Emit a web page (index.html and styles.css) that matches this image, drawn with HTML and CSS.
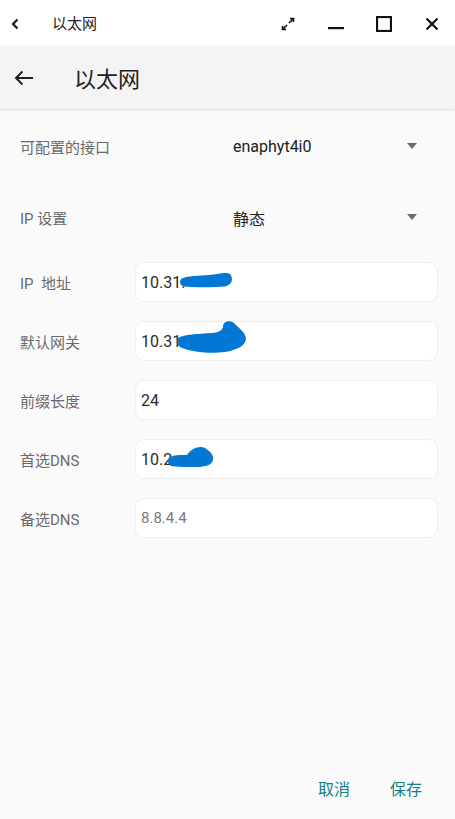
FILE: index.html
```html
<!DOCTYPE html>
<html lang="zh">
<head>
<meta charset="utf-8">
<link rel="stylesheet" href="styles.css">
</head>
<body>
<div class="window">
  <div class="titlebar">
    <svg class="tb-back" width="8" height="12" viewBox="0 0 8 12"><path d="M6.5 1.5 L2 6 L6.5 10.5" fill="none" stroke="#111" stroke-width="2.2"/></svg>
    <span class="tb-title">以太网</span>
    <div class="tb-icons">
      <svg class="ic" width="14" height="14" viewBox="0 0 14 14"><path d="M8 6 L12.5 1.5 M9 1.5 H12.5 V5 M6 8 L1.5 12.5 M1.5 9 V12.5 H5" fill="none" stroke="#111" stroke-width="1.6"/></svg>
      <svg class="ic" width="16" height="16" viewBox="0 0 16 16"><rect x="0" y="11" width="16" height="2.2" fill="#111"/></svg>
      <svg class="ic" width="16" height="16" viewBox="0 0 16 16"><rect x="1" y="1" width="14" height="14" fill="none" stroke="#111" stroke-width="2.2"/></svg>
      <svg class="ic" width="14" height="14" viewBox="0 0 14 14"><path d="M1.5 1.5 L12.5 12.5 M12.5 1.5 L1.5 12.5" fill="none" stroke="#111" stroke-width="2.2"/></svg>
    </div>
  </div>
  <div class="appbar">
    <svg class="ab-back" width="20" height="16" viewBox="0 0 20 16"><path d="M19 8 H2 M8.5 1.5 L2 8 L8.5 14.5" fill="none" stroke="#222" stroke-width="2"/></svg>
    <span class="ab-title">以太网</span>
  </div>
  <div class="content">
    <div class="select-row">
      <span class="label">可配置的接口</span>
      <span class="select-value">enaphyt4i0</span>
      <span class="caret"></span>
    </div>
    <div class="select-row">
      <span class="label">IP 设置</span>
      <span class="select-value">静态</span>
      <span class="caret"></span>
    </div>
    <div class="fields">
      <div class="field-row">
        <span class="label">IP&nbsp; 地址</span>
        <div class="input">10.31.
          <svg class="scribble" width="54" height="17" viewBox="0 0 54 17" style="left:43px;top:8px"><path d="M2 8 C8 4.5 20 5 30 4 C40 3 46 0.5 51 3 C54.5 7 53.5 14 46 15.5 C34 16.5 14 16.5 5 15.5 C1 14.5 0 11 2 8 Z" fill="#0277d4"/></svg>
        </div>
      </div>
      <div class="field-row">
        <span class="label">默认网关</span>
        <div class="input">10.31
          <svg class="scribble" width="71" height="35" viewBox="0 0 71 35" style="left:40px;top:-2px"><path d="M2 18 C8 14 22 14 36 13 C42 12.5 46 11 47 7 C47 1.5 53 -0.5 58 3 C63 8 70 13 70 19 C69 26 61 30 49 32 C35 34 16 32 6 28 C1 26 0 22 2 18 Z" fill="#0277d4"/></svg>
        </div>
      </div>
      <div class="field-row">
        <span class="label">前缀长度</span>
        <div class="input">24</div>
      </div>
      <div class="field-row">
        <span class="label">首选DNS</span>
        <div class="input">10.2
          <svg class="scribble" width="47" height="23" viewBox="0 0 47 23" style="left:31px;top:5px"><path d="M2 13 C6 9.5 14 10 20 10 C24 4 32 0 38 3 C43 6 47 10 46 15 C45 20 38 22 30 22 C20 22 10 22 4 21 C1 19.5 0 16 2 13 Z" fill="#0277d4"/></svg>
        </div>
      </div>
      <div class="field-row">
        <span class="label">备选DNS</span>
        <div class="input placeholder">8.8.4.4</div>
      </div>
    </div>
  </div>
  <div class="actions">
    <span class="btn">取消</span>
    <span class="btn">保存</span>
  </div>
</div>
</body>
</html>
```
FILE: styles.css
```css
* { box-sizing: border-box; }
html, body { margin: 0; padding: 0; }
body {
  width: 455px;
  height: 819px;
  overflow: hidden;
  background: #fafafa;
  font-family: Roboto, "Noto Sans CJK SC", sans-serif;
}
.window {
  display: flex;
  flex-direction: column;
  height: 819px;
}
.titlebar {
  height: 46px;
  background: #ffffff;
  display: flex;
  align-items: center;
  padding-left: 11px;
  flex-shrink: 0;
}
.tb-back { margin-top: 1px; }
.tb-title {
  margin-left: 33px;
  font-size: 15px;
  color: #222;
  margin-top: -2px;
}
.tb-icons {
  margin-left: auto;
  display: flex;
  align-items: center;
  gap: 0;
  margin-top: 1px;
}
.ic { display: block; }
.tb-icons .ic:nth-child(1) { margin-right: 33px; }
.tb-icons .ic:nth-child(2) { margin-right: 32px; margin-top: 1px; }
.tb-icons .ic:nth-child(3) { margin-right: 33px; }
.tb-icons .ic:nth-child(4) { margin-right: 16px; }
.appbar {
  height: 63px;
  background: #f4f4f4;
  display: flex;
  align-items: center;
  padding-left: 14px;
  box-shadow: 0 1px 2px rgba(0,0,0,0.12);
  position: relative;
  z-index: 1;
  flex-shrink: 0;
}
.ab-title {
  margin-left: 40px;
  font-size: 22px;
  color: #222;
  margin-top: -1px;
}
.content {
  flex: 1;
  padding: 0 17px 0 20px;
}
.select-row {
  height: 71px;
  display: flex;
  align-items: center;
  position: relative;
}
.select-row:first-child { margin-top: 2px; }
.label {
  font-size: 15px;
  color: #6a6a6a;
  width: 115px;
  flex-shrink: 0;
}
.select-row .label { width: 213px; }
.select-value {
  font-size: 16px;
  color: #222;
}
.caret {
  margin-left: auto;
  margin-right: 21px;
  width: 0;
  height: 0;
  border-left: 5px solid transparent;
  border-right: 5px solid transparent;
  border-top: 6px solid #6b6b6b;
  margin-top: -2px;
}
.fields {
  display: flex;
  flex-direction: column;
  gap: 19px;
  margin-top: 9px;
}
.field-row {
  display: flex;
  align-items: center;
}
.input {
  position: relative;
  flex: 1;
  height: 40px;
  background: #ffffff;
  border: 1px solid #efefef;
  border-radius: 9px;
  padding-left: 5px;
  display: flex;
  align-items: center;
  font-size: 16px;
  color: #2b2b2b;
}
.input.placeholder { color: #7a7a7a; font-size: 15px; }
.scribble { position: absolute; }
.actions {
  display: flex;
  justify-content: flex-end;
  gap: 40px;
  padding-right: 33px;
  height: 60px;
  padding-top: 17px;
  flex-shrink: 0;
}
.btn {
  font-size: 16px;
  color: #167d84;
}
```
